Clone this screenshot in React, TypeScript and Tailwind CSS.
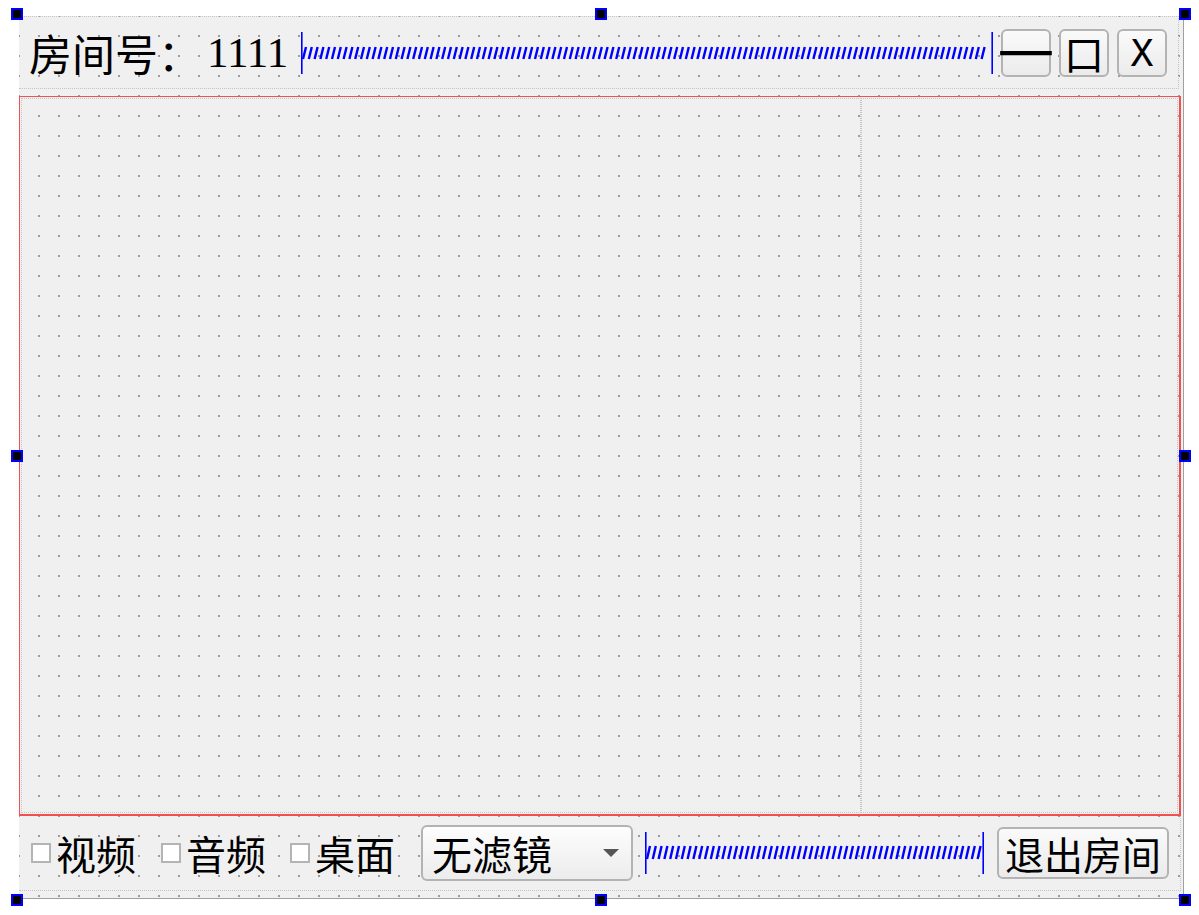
import React from 'react';

// Qt Designer style form preview: room window with top bar, video area and bottom toolbar

const cjk = "font-['Noto_Sans_CJK_SC',sans-serif]";

function Spring({ width, height, top, bottom }: { width: number; height: number; top: number; bottom: number }) {
  let d = '';
  for (let x = 2; x <= width - 6; x += 5.8) {
    d += `M${x.toFixed(1)},${bottom} L${(x + 3).toFixed(1)},${top} `;
  }
  return (
    <svg width={width} height={height} className="shrink-0 block">
      <rect x={0} y={0} width={1.6} height={height} fill="#0000ff" />
      <rect x={width - 1.6} y={0} width={1.6} height={height} fill="#0000ff" />
      <path d={d} stroke="#0000ff" strokeWidth={2.4} fill="none" />
    </svg>
  );
}

function Handle({ className }: { className: string }) {
  return <div className={`absolute w-[12px] h-[12px] bg-black border-2 border-[#0000ff] ${className}`} />;
}

function TitleButton({ children, mono }: { children: React.ReactNode; mono?: boolean }) {
  return (
    <button
      className={`w-[50px] h-[48px] shrink-0 rounded-[6px] border-2 border-[#b3b3b3] bg-gradient-to-b from-[#fafafa] to-[#ebebeb] flex items-center justify-center whitespace-nowrap text-black leading-none ${
        mono ? "font-['DejaVu_Sans_Mono',monospace] text-[38px]" : "font-['Noto_Sans_CJK_SC',sans-serif] text-[40px]"
      }`}
    >
      {children}
    </button>
  );
}

function Check({ label, className }: { label: string; className?: string }) {
  return (
    <label className={`flex items-center shrink-0 ${className ?? ''}`}>
      <span className="w-[20px] h-[20px] border-2 border-[#b4b4b4] bg-white shrink-0" />
      <span className={`${cjk} text-[40px] leading-none ml-[5px] text-black`}>{label}</span>
    </label>
  );
}

export default function App() {
  return (
    <div className="relative w-[1199px] h-[915px] bg-white overflow-hidden">
      <div className="ml-[19px] pt-[16px]">
        <div className="w-[1165px] h-[883px] bg-[#f0f0f0] border-r border-b border-[#a0a0a0] bg-[image:conic-gradient(at_2px_2px,transparent_75%,#9c9c9c_0)] bg-size-[20px_20px] bg-position-[19px_19px]">
          {/* Top bar layout */}
          <div className="w-[1160px] h-[73px] border-t border-r border-b border-dotted border-[#c4c4c4] flex items-center pl-[10px]">
            <div className="w-[272px] shrink-0 flex items-center text-black whitespace-nowrap">
              <span className={`${cjk} text-[43px] leading-none`}>房间号：</span>
              <span className="font-['Liberation_Serif',serif] text-[43px] leading-none ml-[6px]">1111</span>
            </div>
            <Spring width={692} height={42} top={15} bottom={27} />
            <div className="flex items-center gap-[8px] ml-[8px]">
              <TitleButton>
                <span className="inline-block text-[44px] font-bold scale-x-[1.45] -translate-y-[6px]">—</span>
              </TitleButton>
              <TitleButton>口</TitleButton>
              <TitleButton mono>X</TitleButton>
            </div>
          </div>

          {/* Video area layout */}
          <div className="mt-[7px] w-[1162px] h-[720px] border-t border-l border-r-2 border-b-2 border-[#f05050] p-[1px]">
            <div className="flex h-full">
              <div className="w-[840px] h-full border border-dotted border-[#c4c4c4]" />
              <div className="flex-1 h-full border border-dotted border-[#c4c4c4]" />
            </div>
          </div>

          {/* Bottom toolbar layout */}
          <div className="w-[1162px] h-[75px] border-b border-r border-dotted border-[#c4c4c4] flex items-center pl-[12px]">
            <Check label="视频" />
            <Check label="音频" className="ml-[25px]" />
            <Check label="桌面" className="ml-[24px]" />
            <div className="ml-[26px] w-[212px] h-[56px] shrink-0 rounded-[6px] border-2 border-[#b3b3b3] bg-gradient-to-b from-[#fdfdfd] to-[#ececec] flex items-center pl-[9px] pr-[12px]">
              <span className={`${cjk} text-[40px] leading-none text-black flex-1`}>无滤镜</span>
              <svg width="16" height="8" className="block">
                <polygon points="0,0 16,0 8,8" fill="#555555" />
              </svg>
            </div>
            <div className="ml-[12px]">
              <Spring width={339} height={42} top={14} bottom={27} />
            </div>
            <button className={`ml-[13px] w-[172px] h-[52px] shrink-0 rounded-[6px] border-2 border-[#b3b3b3] bg-gradient-to-b from-[#fafafa] to-[#ebebeb] ${cjk} text-[39px] leading-none text-black whitespace-nowrap`}>
              退出房间
            </button>
          </div>
        </div>
      </div>

      <Handle className="left-[11px] top-[8px]" />
      <Handle className="left-[595px] top-[8px]" />
      <Handle className="left-[1179px] top-[8px]" />
      <Handle className="left-[11px] top-[450px]" />
      <Handle className="left-[1179px] top-[450px]" />
      <Handle className="left-[11px] top-[894px]" />
      <Handle className="left-[595px] top-[894px]" />
      <Handle className="left-[1179px] top-[894px]" />
    </div>
  );
}
